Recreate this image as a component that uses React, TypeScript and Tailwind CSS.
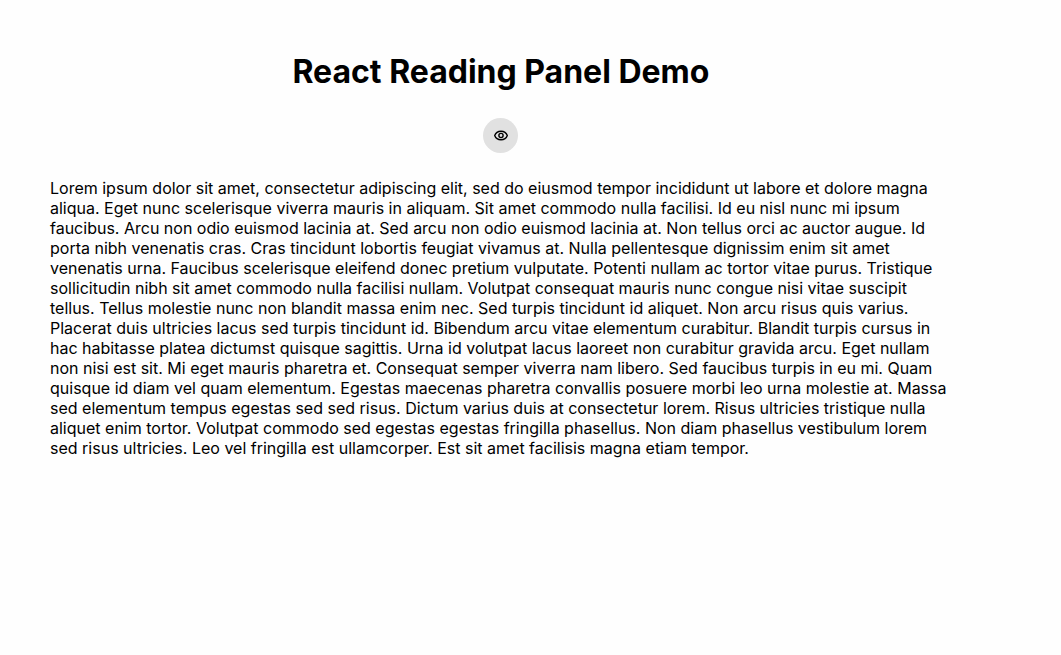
import React from "react";

const text =
  "Lorem ipsum dolor sit amet, consectetur adipiscing elit, sed do eiusmod tempor incididunt ut labore et dolore magna aliqua. Eget nunc scelerisque viverra mauris in aliquam. Sit amet commodo nulla facilisi. Id eu nisl nunc mi ipsum faucibus. Arcu non odio euismod lacinia at. Sed arcu non odio euismod lacinia at. Non tellus orci ac auctor augue. Id porta nibh venenatis cras. Cras tincidunt lobortis feugiat vivamus at. Nulla pellentesque dignissim enim sit amet venenatis urna. Faucibus scelerisque eleifend donec pretium vulputate. Potenti nullam ac tortor vitae purus. Tristique sollicitudin nibh sit amet commodo nulla facilisi nullam. Volutpat consequat mauris nunc congue nisi vitae suscipit tellus. Tellus molestie nunc non blandit massa enim nec. Sed turpis tincidunt id aliquet. Non arcu risus quis varius. Placerat duis ultricies lacus sed turpis tincidunt id. Bibendum arcu vitae elementum curabitur. Blandit turpis cursus in hac habitasse platea dictumst quisque sagittis. Urna id volutpat lacus laoreet non curabitur gravida arcu. Eget nullam non nisi est sit. Mi eget mauris pharetra et. Consequat semper viverra nam libero. Sed faucibus turpis in eu mi. Quam quisque id diam vel quam elementum. Egestas maecenas pharetra convallis posuere morbi leo urna molestie at. Massa sed elementum tempus egestas sed sed risus. Dictum varius duis at consectetur lorem. Risus ultricies tristique nulla aliquet enim tortor. Volutpat commodo sed egestas egestas fringilla phasellus. Non diam phasellus vestibulum lorem sed risus ultricies. Leo vel fringilla est ullamcorper. Est sit amet facilisis magna etiam tempor.";

function EyeIcon() {
  return (
    <svg viewBox="0 0 16 16" className="size-4" fill="none" stroke="currentColor" strokeWidth="1.4" aria-hidden="true">
      <path
        strokeLinejoin="round"
        d="M1.700 7.500C2.500 5.200 5 3.200 8 3.200s5.500 2 6.300 4.300C13.500 9.800 11 11.800 8 11.800S2.500 9.800 1.700 7.500z"
      />
      <circle cx="8" cy="7.500" r="2.100" />
    </svg>
  );
}

export default function App() {
  return (
    <div className="min-h-screen bg-[#fefefe]">
      <main className="box-content w-17/20 px-[50px] pt-12 font-['Inter',sans-serif] text-base leading-5 text-black">
        <header className="flex flex-col items-center gap-[22px]">
          <h1 className="text-[32px] leading-12 font-bold">React Reading Panel Demo</h1>
          <button
            type="button"
            aria-label="Reading mode"
            className="flex size-[35px] items-center justify-center rounded-full bg-[#e1e1e1]"
          >
            <EyeIcon />
          </button>
        </header>
        <p className="mt-[25px]">{text}</p>
      </main>
    </div>
  );
}
